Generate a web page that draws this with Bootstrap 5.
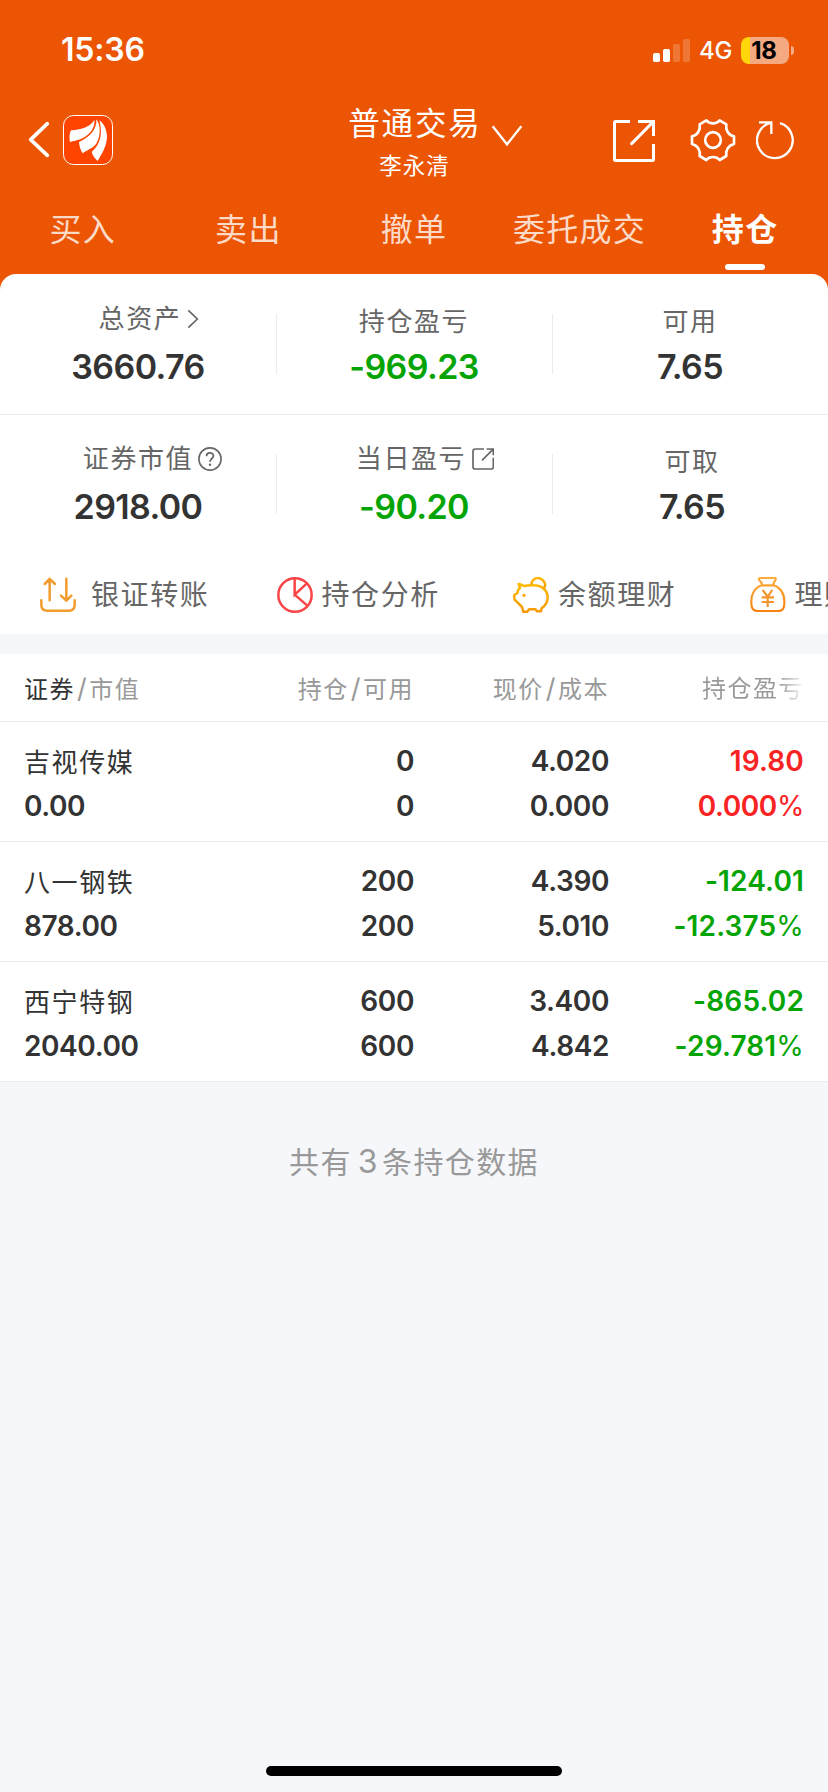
<!DOCTYPE html>
<html lang="zh-CN">
<head>
<meta charset="utf-8">
<meta name="viewport" content="width=device-width, initial-scale=1">
<title>持仓</title>
<link href="https://cdn.jsdelivr.net/npm/bootstrap@5.3.0/dist/css/bootstrap.min.css" rel="stylesheet">
<style>
  :root { --brand:#eb5503; --line:#ececee; --ink:#333; --up:#fa2323; --down:#04a404; }
  body { background:#f6f7fa; color:var(--ink); font-family:Inter,"Noto Sans CJK SC",sans-serif; min-height:1792px; overflow-x:hidden; }
  svg { display:block; flex:none; }
  .page-shell { width:828px; height:1792px; }
  .brand-bg { background:var(--brand); }

  .status-bar { height:100px; padding:0 34px 0 61px; }
  .clock { font-size:32px; font-weight:600; line-height:40px; letter-spacing:-.2px; }
  .net-label { font-size:24px; font-weight:500; line-height:30px; margin:1px 0 0 9px; width:42px; letter-spacing:-.3px; }
  .battery { width:48px; height:27px; border-radius:8px; background:linear-gradient(90deg,#ffd60a 9px,#f5a981 9px); color:#000; font-size:24px; font-weight:700; line-height:27px; letter-spacing:-.3px; padding-right:2px; }
  .battery-tip { width:3px; height:9px; border-radius:0 4px 4px 0; background:#f5a981; margin-left:2px; }

  .title-bar { height:80px; }
  .side { flex:1 1 0; }
  .title-main { font-size:31.5px; line-height:42px; letter-spacing:1.8px; margin-right:-1.8px; }
  .title-sub { font-size:22.5px; line-height:42px; letter-spacing:1px; margin-right:-1px; }

  .trade-tabs { height:94px; }
  .trade-tabs .nav-link { flex-basis:0; padding:29px 0 0; font-size:32px; line-height:42px; letter-spacing:1.3px; color:#fcdac8; border:0; }
  .trade-tabs .nav-link.active { color:#fff; font-weight:600; }
  .trade-tabs .nav-link.active::after { content:""; display:block; width:40px; height:6px; border-radius:3px; background:#fff; margin:13px auto 0; }

  .summary { border-radius:16px 16px 0 0; }
  .sum-row { height:140px; }
  .sum-row + .sum-row { border-top:1px solid var(--line); height:141px; }
  .sum-cell { flex:0 0 276px; padding-top:28px; position:relative; }
  .sum-cell + .sum-cell::before { content:""; position:absolute; left:0; top:40px; width:1px; height:60px; background:var(--line); }
  .sum-row + .sum-row .sum-cell { padding-top:27px; }
  .sum-row + .sum-row .sum-cell::before { top:39px; }
  .sum-label { height:38px; line-height:40px; font-size:26px; letter-spacing:1.6px; color:#666; }
  .sum-value { font-size:34px; font-weight:600; line-height:44px; margin-top:5px; letter-spacing:-.6px; }

  .shortcuts { height:79px; padding-left:40px; overflow:hidden; }
  .shortcut { flex:none; width:236.5px; font-size:28px; line-height:40px; letter-spacing:1.6px; color:#666; white-space:nowrap; gap:9px; }

  .holdings { border-bottom:1px solid var(--line); margin-top:20px; }
  .h-line { display:grid; grid-template-columns:200px 190px 195px 195px; padding-left:24px; align-content:start; }
  .h-line > * + * { text-align:right; }
  .h-head { height:67px; font-size:24px; line-height:70px; letter-spacing:1.5px; color:#999; }
  .h-head i { font-style:normal; font-size:27px; margin:0 1px 0 2px; }
  .fade-end { background:linear-gradient(90deg,#999 76px,#fff 104px); -webkit-background-clip:text; background-clip:text; color:transparent; display:inline-block; }
  .h-row { border-top:1px solid var(--line); height:120px; padding-top:17px; font-size:28px; font-weight:600; line-height:45px; }
  .h-name { font-size:26px; font-weight:400; letter-spacing:1.6px; padding-top:1px; height:45px; }
  .num { letter-spacing:-.4px; }
  .h-line > .worth { text-align:left; }
  .num u { text-decoration:none; font-weight:400; }
  .up { color:var(--up); } .down { color:var(--down); }
  .num.down, .num.gain { letter-spacing:.15px; }

  .count-note { margin-top:59px; font-size:30px; line-height:42px; letter-spacing:1.4px; color:#999; }
  .count-note b { font-weight:400; font-size:32px; margin:0 3px 0 6px; }
  .home-bar { width:296px; height:10px; border-radius:5px; background:#000; margin-bottom:16px; }
</style>
</head>
<body>
<div class="page-shell d-flex flex-column">
  <header class="brand-bg text-white">
    <div class="status-bar d-flex align-items-center">
      <span class="clock me-auto">15:36</span>
      <svg width="37" height="23" viewBox="717 114 111 69" fill="#fff"><rect x="717" y="156" width="21" height="27" rx="5"/><rect x="747" y="144" width="21" height="39" rx="5"/><g opacity=".2"><rect x="777" y="129" width="21" height="54" rx="5"/><rect x="807" y="114" width="21" height="69" rx="5"/></g></svg>
      <span class="net-label">4G</span>
      <span class="battery text-center">18</span><span class="battery-tip"></span>
    </div>
    <div class="title-bar d-flex align-items-start">
      <div class="side d-flex">
        <svg style="margin:20px 0 0 28px" width="22" height="38" viewBox="84 360 66 114" fill="none" stroke="#fff" stroke-width="11" stroke-linecap="round" stroke-linejoin="round"><path d="M142 371 92 419l50 47"/></svg>
        <svg style="margin:15px 0 0 13px" width="50" height="50" viewBox="189 345 150 150"><rect x="190.500" y="346.500" width="147" height="147" rx="30" fill="#ff4400" stroke="#fff" stroke-width="3"/><g fill="#fff"><path d="M283 359C274 378 246 389 213 391Q206 406 210 426C225 420 238 421 250 413C272 401 286 381 283 359Z"/><path d="M289 358C291 388 270 412 237 426C238 440 242 451 248 460C265 447 281 445 290 429C303 406 302 373 289 358Z"/><path d="M298 361C308 398 303 433 275 456C278 468 286 477 293 483C304 463 321 440 321 408C320 387 311 370 298 361Z"/></g></svg>
      </div>
      <div class="text-center" style="margin-top:3px">
        <div class="title-main">普通交易</div>
        <div class="title-sub">李永清</div>
      </div>
      <div class="side d-flex">
        <svg style="margin:25px 0 0 11px" width="32" height="22" viewBox="231 375 96 66" fill="none" stroke="#fff" stroke-width="7"><path d="M236 379 279 433 322 379"/></svg>
        <svg style="margin:20px 0 0 auto" width="42" height="42" viewBox="594 360 126 126" fill="none" stroke="#fff" stroke-width="9"><path d="M645 364.500H602Q598.500 364.500 598.500 368V478Q598.500 481.500 602 481.500H712Q715.500 481.500 715.500 478V432M669 364.500H715.500V408"/><path d="M714 366 650 431" stroke-linecap="round"/></svg>
        <svg style="margin:18px 0 0 35px" width="46" height="45" viewBox="828 354 138 135" fill="none" stroke="#fff" stroke-width="8" stroke-linejoin="round"><circle cx="897" cy="420" r="23.500"/><path d="M877 361C887 373 907 373 917 361L937 373C934 390 943 405 960 409V432C943 436 934 451 937 468L917 480C907 468 887 468 877 480L857 468C860 451 851 436 834 432V409C851 405 860 390 857 373Z"/></svg>
        <svg style="margin:20px 32px 0 20px" width="40" height="40" viewBox="1026 360 120 120" fill="none" stroke="#fff" stroke-width="7"><path d="M1098 369.500A53.500 53.500 0 1 1 1071 368.500M1035 367H1072V402" /></svg>
      </div>
    </div>
    <nav class="trade-tabs nav nav-justified flex-nowrap">
      <a class="nav-link">买入</a>
      <a class="nav-link">卖出</a>
      <a class="nav-link">撤单</a>
      <a class="nav-link text-nowrap">委托成交</a>
      <a class="nav-link active">持仓</a>
    </nav>
  </header>

  <div class="brand-bg">
    <section class="summary bg-white">
      <div class="sum-row d-flex text-center">
        <div class="sum-cell">
          <div class="sum-label d-flex justify-content-center align-items-center" style="margin:-2px 0 7px 22px">总资产<svg style="margin-left:6px" width="12" height="20" viewBox="561 117 36 60" fill="none" stroke="#666" stroke-width="5"><path d="M565 121 592 147 565 173"/></svg></div>
          <div class="sum-value">3660.76</div>
        </div>
        <div class="sum-cell"><div class="sum-label">持仓盈亏</div><div class="sum-value down">-969.23</div></div>
        <div class="sum-cell"><div class="sum-label">可用</div><div class="sum-value">7.65</div></div>
      </div>
      <div class="sum-row d-flex text-center">
        <div class="sum-cell">
          <div class="sum-label d-flex justify-content-center align-items-center" style="margin:-2px 0 7px 29px">证券市值<svg style="margin-left:5px" width="24" height="24" viewBox="0 0 24 24" fill="none" stroke="#666" stroke-width="1.6"><circle cx="12" cy="12" r="11.100"/><path d="M8.500 9.300C8.500 4.600 15.500 4.900 15.400 9 15.300 11.500 12.100 11.600 12 14.800" stroke-width="1.800"/><circle cx="12" cy="17.800" r="1.200" fill="#666" stroke="none"/></svg></div>
          <div class="sum-value">2918.00</div>
        </div>
        <div class="sum-cell">
          <div class="sum-label d-flex justify-content-center align-items-center" style="margin:-2px 0 7px 22px">当日盈亏<svg style="margin-left:6px" width="22" height="22" viewBox="171 534 66 66" fill="none" stroke="#666" stroke-width="5"><path d="M207 537H181Q174 537 174 544V590Q174 597 181 597H228Q235 597 235 590V563M215 537H235V556M234 538 201 571"/></svg></div>
          <div class="sum-value down">-90.20</div>
        </div>
        <div class="sum-cell ps-1"><div class="sum-label">可取</div><div class="sum-value">7.65</div></div>
      </div>
    </section>
  </div>

  <section class="shortcuts bg-white d-flex align-items-center">
    <div class="shortcut d-flex align-items-center" style="gap:15px"><svg width="36" height="36" viewBox="120 78 108 108" fill="none" stroke="#f29b2e" stroke-width="7.500" stroke-linecap="round" stroke-linejoin="round"><path d="M149 148V84M134 99 149 84 165 99M199 83V149M183 134 199 149 214 134M124 148V161Q124 179 142 179H206Q224 179 224 161V148"/></svg>银证转账</div>
    <div class="shortcut d-flex align-items-center"><svg width="36" height="36" viewBox="831 78 108 108" fill="none" stroke="#fa4548" stroke-width="7.500"><circle cx="885" cy="132" r="50"/><path d="M884 82V131L920 98M884 131 921 163"/></svg>持仓分析</div>
    <div class="shortcut d-flex align-items-center"><svg width="36" height="36" viewBox="297 78 108 108" fill="none" stroke="url(#gold)" stroke-width="7.500" stroke-linejoin="round"><defs><linearGradient id="gold" x1="0" y1="0" x2="0" y2="1"><stop stop-color="#ffb800"/><stop offset="1" stop-color="#f79a08"/></linearGradient></defs><path d="M314 99Q322 101 330 105Q345 102 360 103C383 103 401 118 401 139C401 153 393 165 383 172L381 181H369L365 175H345L340 182H328L324 168L311 155L301 145V132L310 126Q312 114 318 111Z"/><path d="M352 100C355 80 373 76 387 88Q398 99 390 112"/><circle cx="330" cy="133" r="5" fill="#fbaa05" stroke="none"/></svg>余额理财</div>
    <div class="shortcut d-flex align-items-center"><svg width="36" height="36" viewBox="1007 78 108 108" fill="none" stroke="url(#amber)" stroke-width="6.500" stroke-linejoin="round"><defs><linearGradient id="amber" x1="0" y1="0" x2="0" y2="1"><stop stop-color="#ffab38"/><stop offset="1" stop-color="#f58212"/></linearGradient></defs><path d="M1036 81H1082Q1087 83 1082 89L1078 96V103C1098 109 1110 128 1110 151C1111 172 1105 180 1090 180H1032C1016 180 1010 172 1011 151C1011 128 1022 109 1042 103V96L1036 89Q1031 83 1036 81M1042 103H1078"/><path d="M1045 117 1060 137 1074 117M1060 137V168M1042 139H1079M1042 153H1079" stroke="#f5942a"/></svg>理财</div>
  </section>

  <section class="holdings bg-white">
    <div class="h-line h-head"><div><span style="color:#333">证券</span><i>/</i>市值</div><div>持仓<i>/</i>可用</div><div>现价<i>/</i>成本</div><div><span class="fade-end">持仓盈亏</span></div></div>
    <div class="h-line h-row"><div class="h-name">吉视传媒</div><div class="num">0</div><div class="num">4.020</div><div class="num up gain">19.80</div><div class="num worth">0.00</div><div class="num">0</div><div class="num">0.000</div><div class="num up">0.000<u>%</u></div></div>
    <div class="h-line h-row"><div class="h-name">八一钢铁</div><div class="num">200</div><div class="num">4.390</div><div class="num down">-124.01</div><div class="num worth">878.00</div><div class="num">200</div><div class="num">5.010</div><div class="num down">-12.375<u>%</u></div></div>
    <div class="h-line h-row"><div class="h-name">西宁特钢</div><div class="num">600</div><div class="num">3.400</div><div class="num down">-865.02</div><div class="num worth">2040.00</div><div class="num">600</div><div class="num">4.842</div><div class="num down">-29.781<u>%</u></div></div>
  </section>

  <p class="count-note text-center mb-0">共有<b>3</b>条持仓数据</p>
  <div class="home-bar mt-auto mx-auto"></div>
</div>
<script src="https://cdn.jsdelivr.net/npm/bootstrap@5.3.0/dist/js/bootstrap.bundle.min.js"></script>
</body>
</html>
